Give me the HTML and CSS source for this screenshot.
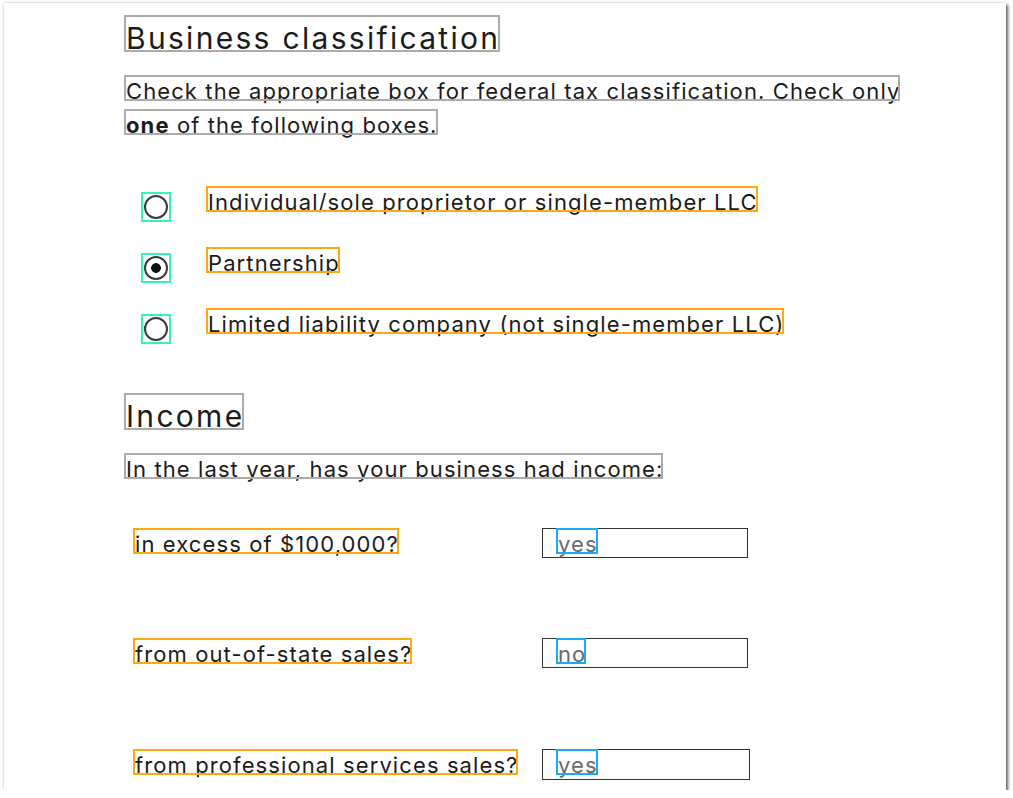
FILE: index.html
```html
<!DOCTYPE html>
<html lang="en">
<head>
<meta charset="utf-8">
<title>Business classification</title>
<link rel="stylesheet" href="styles.css">
</head>
<body>
<main class="page">
  <section class="section">
    <h2 class="heading"><span class="tag tag-h">Business classification</span></h2>
    <p class="intro">
      <span class="tag tag-t">Check the appropriate box for federal tax classification. Check only</span>
      <span class="tag tag-t"><b>one</b> of the following boxes.</span>
    </p>
    <div class="choices">
      <label class="choice">
        <span class="radio-wrap"><input class="radio" type="radio" name="cls"></span>
        <span class="tag tag-t tag-orange">Individual/sole proprietor or single-member LLC</span>
      </label>
      <label class="choice">
        <span class="radio-wrap"><input class="radio" type="radio" name="cls" checked></span>
        <span class="tag tag-t tag-orange">Partnership</span>
      </label>
      <label class="choice">
        <span class="radio-wrap"><input class="radio" type="radio" name="cls"></span>
        <span class="tag tag-t tag-orange">Limited liability company (not single-member LLC)</span>
      </label>
    </div>
  </section>

  <section class="section income">
    <h2 class="heading"><span class="tag tag-h">Income</span></h2>
    <p class="intro"><span class="tag tag-t">In the last year, has your business had income:</span></p>
    <div class="rows">
      <div class="row">
        <span class="row-label"><span class="tag tag-t tag-orange">in excess of $100,000?</span></span>
        <div class="field"><span class="tag tag-t tag-blue value">yes</span></div>
      </div>
      <div class="row">
        <span class="row-label"><span class="tag tag-t tag-orange">from out-of-state sales?</span></span>
        <div class="field"><span class="tag tag-t tag-blue value">no</span></div>
      </div>
      <div class="row">
        <span class="row-label"><span class="tag tag-t tag-orange">from professional services sales?</span></span>
        <div class="field field-wide"><span class="tag tag-t tag-blue value">yes</span></div>
      </div>
    </div>
  </section>
</main>
</body>
</html>
```
FILE: styles.css
```css
html, body {
  margin: 0;
  background: #ffffff;
}

body {
  font-family: Inter, "Noto Sans", "Liberation Sans", sans-serif;
  color: #1b1b1b;
}

.page {
  box-sizing: border-box;
  width: 1002px;
  height: 787px;
  margin: 3px 0 0 4px;
  padding: 12px 0 0 120px;
  background: #ffffff;
  overflow: hidden;
  box-shadow: 2px 2px 3px rgba(0, 0, 0, 0.6), 0 0 3px rgba(0, 0, 0, 0.18);
}

.section {
  display: flex;
  flex-direction: column;
  align-items: flex-start;
}

.income {
  margin-top: 49px;
}

.heading {
  display: flex;
  margin: 0;
  font-weight: 400;
}

.intro {
  display: flex;
  flex-direction: column;
  align-items: flex-start;
  gap: 8px;
  margin: 23px 0 0;
}

.tag {
  display: inline-block;
  white-space: nowrap;
  outline: 2px solid #ababab;
  outline-offset: -2px;
}

.tag-h {
  font-size: 30px;
  line-height: 28px;
  padding: 9px 0 0 2px;
  letter-spacing: 2.3px;
}

.tag-t {
  font-size: 22px;
  line-height: 20px;
  padding: 6px 0 0 2px;
  letter-spacing: 1.1px;
}

.tag-t b {
  font-weight: 700;
}

.tag-orange {
  outline-color: #ffa812;
}

.tag-blue {
  outline-color: #19aaf8;
}

.choices {
  display: flex;
  flex-direction: column;
  align-items: flex-start;
  gap: 25px;
  margin-top: 51px;
}

.choice {
  display: flex;
  align-items: flex-start;
  gap: 35px;
  padding-left: 17px;
}

.radio-wrap {
  display: flex;
  align-items: center;
  justify-content: center;
  width: 30px;
  height: 30px;
  margin-top: 6px;
  box-sizing: border-box;
  outline: 2px solid #38f2b0;
  outline-offset: -2px;
}

.radio {
  appearance: none;
  -webkit-appearance: none;
  box-sizing: border-box;
  width: 24px;
  height: 24px;
  margin: 0;
  border: 2px solid #3a3a3a;
  border-radius: 50%;
  background: #ffffff;
}

.radio:checked {
  background: radial-gradient(circle, #111111 0 4.5px, transparent 5.2px);
}

.intro + .rows {
  margin-top: 49px;
}

.rows {
  display: flex;
  flex-direction: column;
  gap: 80px;
}

.row {
  display: flex;
  align-items: flex-start;
  padding-left: 9px;
}

.row-label {
  display: flex;
  width: 409px;
  flex: none;
}

.field {
  box-sizing: border-box;
  display: flex;
  align-items: flex-start;
  width: 206px;
  height: 30px;
  padding-left: 13px;
  border: 1px solid #333333;
}

.field-wide {
  width: 208px;
  height: 31px;
}

.rows .row:last-child {
  margin-top: 1px;
}

.value {
  color: #6a6a6a;
  margin-top: -1px;
}
```
